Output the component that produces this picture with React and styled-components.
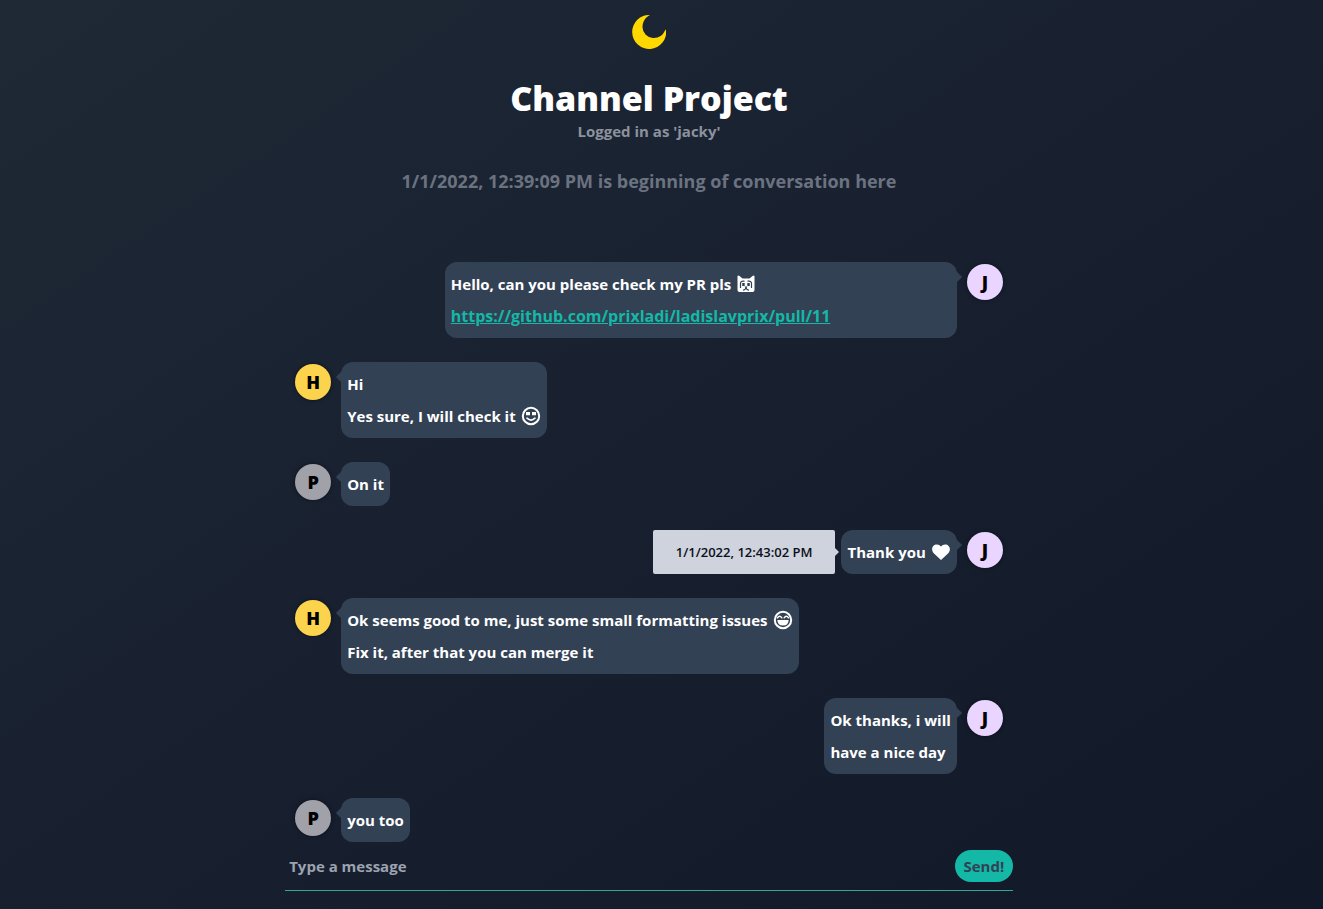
import React from "react";
import styled, { createGlobalStyle } from "styled-components";

const GlobalStyle = createGlobalStyle`
  *, *::before, *::after { box-sizing: border-box; }
  html { background: #111827; }
  body {
    margin: 0;
    font-family: "Open Sans", "Noto Sans", sans-serif;
    font-size: 15px;
    font-weight: 700;
    line-height: 24px;
    color: #ffffff;
  }
  h1, p { margin: 0; }
  button, input { font: inherit; }
`;

const Page = styled.div`
  display: flex;
  flex-direction: column;
  align-items: center;
  min-height: 100vh;
  padding: 15px 25px 18px 0;
  background: linear-gradient(to bottom right, #1f2935, #182030 50%, #111827);
`;

const Column = styled.main`
  display: flex;
  flex-direction: column;
  flex: 1;
  width: 55vw;
`;

const Header = styled.header`
  display: flex;
  flex-direction: column;
  align-items: center;
  text-align: center;
`;

const ThemeButton = styled.button`
  display: flex;
  padding: 0;
  border: 0;
  background: none;
  cursor: pointer;
`;

const Title = styled.h1`
  margin-top: 28px;
  font-size: 34px;
  font-weight: 800;
  line-height: 42px;
`;

const LoggedIn = styled.p`
  color: #8b929e;
`;

const Beginning = styled.p`
  margin-top: 24px;
  font-size: 18px;
  line-height: 28px;
  color: #6b7280;
`;

const Messages = styled.ul`
  display: flex;
  flex-direction: column;
  gap: 24px;
  margin: 67px 0 0;
  padding: 0 10px;
  list-style: none;
`;

const Message = styled.li`
  display: flex;
  flex-direction: ${(p) => (p.$own ? "row-reverse" : "row")};
  align-items: flex-start;
`;

const avatarColors = { J: "#e9d5ff", H: "#fcd34d", P: "#a1a1aa" };

const Avatar = styled.span`
  display: flex;
  align-items: center;
  justify-content: center;
  flex: none;
  width: 36px;
  height: 36px;
  margin-top: 2px;
  border-radius: 50%;
  background: ${(p) => avatarColors[p.$name]};
  box-shadow: 0 0 4px rgba(0, 0, 0, 0.5);
  font-size: 18px;
  font-weight: 800;
  color: #000000;
`;

const Bubble = styled.div`
  position: relative;
  width: ${(p) => (p.$wide ? "512px" : "auto")};
  max-width: 75%;
  margin: 0 10px;
  padding: 6px;
  border-radius: 12px;
  background: #334155;
  line-height: 32px;

  &::before {
    content: "";
    position: absolute;
    top: 10px;
    ${(p) => (p.$own ? "right" : "left")}: -3px;
    width: 10px;
    height: 10px;
    background: #334155;
    transform: rotate(45deg);
  }
`;

const Line = styled.p`
  display: flex;
  align-items: center;
  gap: 5px;
`;

const Link = styled.a`
  font-size: 16px;
  color: #14b8a6;
  text-decoration: underline;
`;

const Tooltip = styled.time`
  position: relative;
  display: flex;
  align-items: center;
  align-self: stretch;
  margin-right: -4px;
  padding: 0 23px;
  border-radius: 2px;
  background: #cfd3de;
  font-size: 13px;
  font-weight: 600;
  color: #0b0f19;

  &::after {
    content: "";
    position: absolute;
    top: 50%;
    left: 100%;
    margin-top: -4px;
    border: 4px solid transparent;
    border-left-color: #cfd3de;
    border-right-width: 0;
  }
`;

const Composer = styled.form`
  display: flex;
  align-items: center;
  margin-top: auto;
  padding: 8px 0;
  border-bottom: 1px solid #2fa898;
`;

const MessageInput = styled.input`
  flex: 1;
  min-width: 0;
  height: 32px;
  padding: 0 4px;
  border: 0;
  outline: 0;
  background: none;
  color: #ffffff;

  &::placeholder { color: #9ca3af; opacity: 1; }
`;

const SendButton = styled.button`
  width: 58px;
  height: 32px;
  padding: 0;
  border: 0;
  border-radius: 16px;
  background: #14b8a6;
  color: #334155;
  cursor: pointer;
`;

const Moon = () => (
  <svg width="34" height="34" viewBox="0 0 34 34" aria-hidden="true">
    <path fill="#ffd800" d="M18 0A17 17 0 1 0 34 14.500Q34 14 33 15.500A12.500 12.500 0 0 1 21 23A11 11 0 0 1 10.500 12.500C10.500 7 13 2.500 18 0Z" />
  </svg>
);

const CatFace = () => (
  <svg width="20" height="20" viewBox="0 0 20 20" role="img" aria-label="cat face">
    <path fill="#fff" d="M1.500 2Q2.500 1 3.500 2L6.500 4.500H13.500L16.500 2Q17.500 1 18.500 2V16Q18.500 18 16.500 18H3.500Q1.500 18 1.500 16Z" />
    <path fill="none" stroke="#334155" strokeWidth="1.200" d="M4.500 14V9Q5 7.200 7 7.200H8.500M15.500 14V9Q15 7.200 13 7.200H11.500M7 16Q9 16.300 10 14Q11 16.300 13 16" />
    <path fill="#334155" d="M6.200 9H8.700V12H6.200ZM11.300 9H13.800V12H11.300ZM8.500 12.500H11.500L10 14.500Z" />
  </svg>
);

const SmilingFace = () => (
  <svg width="20" height="20" viewBox="0 0 20 20" role="img" aria-label="smiling face">
    <circle cx="10" cy="10" r="8.200" fill="none" stroke="#fff" strokeWidth="2" />
    <path fill="#fff" d="M5 6H9V9.200H5ZM11 6H15V9.200H11Z" />
    <path fill="none" stroke="#fff" strokeWidth="1.600" strokeLinecap="round" d="M6 12.200Q10 16 14 12.200" />
  </svg>
);

const Grin = () => (
  <svg width="20" height="20" viewBox="0 0 20 20" role="img" aria-label="grinning face">
    <circle cx="10" cy="10" r="8.200" fill="none" stroke="#fff" strokeWidth="2" />
    <path fill="#fff" d="M4.300 10H15.700Q15.500 15.500 10 15.500Q4.500 15.500 4.300 10Z" />
    <path fill="none" stroke="#fff" strokeWidth="1.500" strokeLinecap="round" d="M4.500 7.800Q6.800 4.800 8.800 7.800M11.200 7.800Q13.200 4.800 15.500 7.800" />
  </svg>
);

const Heart = () => (
  <svg width="20" height="20" viewBox="0 0 20 20" role="img" aria-label="heart">
    <path fill="#fff" d="M10 18L3 11.500C-1 7 2 2.500 5.800 2.500Q8.600 2.500 10 4.600Q11.400 2.500 14.200 2.500C18 2.500 21 7 17 11.500Z" />
  </svg>
);

const messages = [
  {
    from: "J", own: true, wide: true,
    lines: [
      <>Hello, can you please check my PR pls <CatFace /></>,
      <Link href="https://github.com/prixladi/ladislavprix/pull/11">https://github.com/prixladi/ladislavprix/pull/11</Link>,
    ],
  },
  { from: "H", lines: ["Hi", <>Yes sure, I will check it <SmilingFace /></>] },
  { from: "P", lines: ["On it"] },
  { from: "J", own: true, time: "1/1/2022, 12:43:02 PM", lines: [<>Thank you <Heart /></>] },
  {
    from: "H",
    lines: [<>Ok seems good to me, just some small formatting issues <Grin /></>, "Fix it, after that you can merge it"],
  },
  { from: "J", own: true, lines: ["Ok thanks, i will", "have a nice day"] },
  { from: "P", lines: ["you too"] },
];

export default function App() {
  return (
    <>
      <GlobalStyle />
      <Page>
        <Column>
          <Header>
            <ThemeButton type="button" aria-label="Toggle theme"><Moon /></ThemeButton>
            <Title>Channel Project</Title>
            <LoggedIn>Logged in as 'jacky'</LoggedIn>
            <Beginning>1/1/2022, 12:39:09 PM is beginning of conversation here</Beginning>
          </Header>
          <Messages>
            {messages.map((m, i) => (
              <Message key={i} $own={m.own}>
                <Avatar $name={m.from}>{m.from}</Avatar>
                <Bubble $own={m.own} $wide={m.wide}>
                  {m.lines.map((line, j) => <Line key={j}>{line}</Line>)}
                </Bubble>
                {m.time && <Tooltip>{m.time}</Tooltip>}
              </Message>
            ))}
          </Messages>
          <Composer onSubmit={(e) => e.preventDefault()}>
            <MessageInput type="text" aria-label="Message" placeholder="Type a message" />
            <SendButton type="submit">Send!</SendButton>
          </Composer>
        </Column>
      </Page>
    </>
  );
}
